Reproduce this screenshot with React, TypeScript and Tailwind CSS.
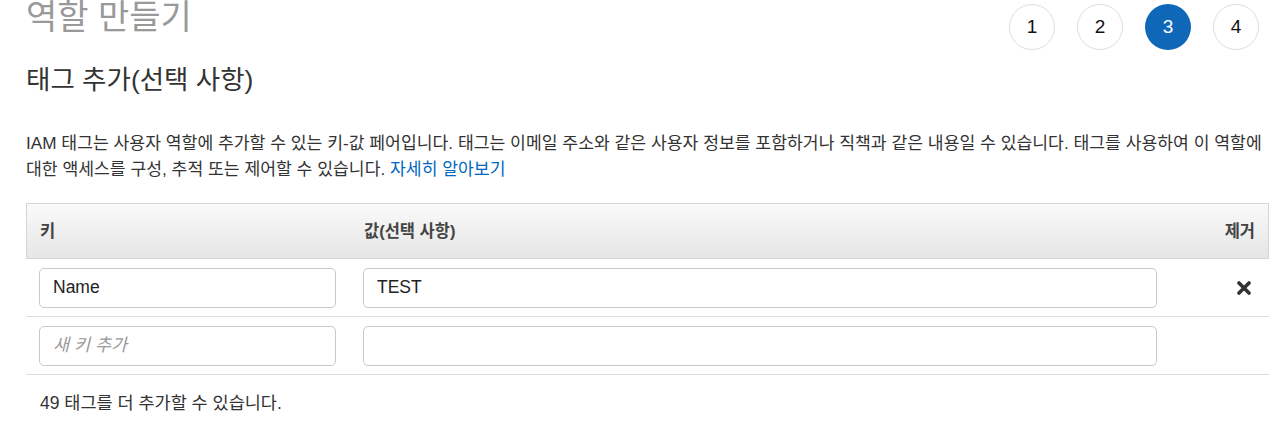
import React from "react";

const font = { fontFamily: '"Liberation Sans", "Noto Sans CJK KR", sans-serif' };

function Step({ n, active }: { n: number; active?: boolean }) {
  return (
    <div
      className={
        active
          ? "w-[46px] h-[46px] rounded-full bg-[#0f67b8] text-white flex items-center justify-center text-[19px]"
          : "w-[46px] h-[46px] rounded-full border border-[#dddddd] bg-white text-[#111] flex items-center justify-center text-[19px]"
      }
    >
      {n}
    </div>
  );
}

export default function App() {
  return (
    <div className="bg-white w-[1280px] h-[426px] overflow-hidden text-[#333]" style={font}>
      <div className="pl-[26px] pr-[11px]">
        <div className="flex justify-between items-start">
          <h1 className="text-[34px] leading-[40px] text-[#999] mt-[-3px]">역할 만들기</h1>
          <div className="flex gap-[22px] mt-[4px] mr-[10px]">
            <Step n={1} />
            <Step n={2} />
            <Step n={3} active />
            <Step n={4} />
          </div>
        </div>
        <h2 className="text-[26.5px] leading-[32px] text-[#333] mt-[14px]">태그 추가(선택 사항)</h2>
        <p className="text-[17.2px] leading-[26px] text-[#333] mt-[34px] whitespace-nowrap">
          IAM 태그는 사용자 역할에 추가할 수 있는 키-값 페어입니다. 태그는 이메일 주소와 같은 사용자 정보를 포함하거나 직책과 같은 내용일 수 있습니다. 태그를 사용하여 이 역할에
          <br />
          대한 액세스를 구성, 추적 또는 제어할 수 있습니다. <span className="text-[#0066c0]">자세히 알아보기</span>
        </p>
        <div className="mt-[21px]">
          <div className="flex h-[56px] items-center border border-[#d5d5d5] bg-gradient-to-b from-[#fafafa] to-[#e6e6e6] text-[16.5px] font-bold text-[#444]">
            <div className="w-[324px] pl-[13px]">키</div>
            <div className="flex-1 pl-[13px]">값(선택 사항)</div>
            <div className="w-[98px] pr-[13px] text-right">제거</div>
          </div>
          <div className="flex items-center h-[58px] border-b border-[#dddddd]">
            <div className="w-[324px] pl-[13px] pr-[14px]">
              <div className="h-[40px] border border-[#c8c8c8] rounded-[5px] flex items-center px-[13px] text-[17.5px] text-[#222]">Name</div>
            </div>
            <div className="flex-1 pl-[13px] pr-[14px]">
              <div className="h-[40px] border border-[#c8c8c8] rounded-[5px] flex items-center px-[13px] text-[17.5px] text-[#222]">TEST</div>
            </div>
            <div className="w-[98px] flex justify-end pr-[18px]">
              <svg width="14" height="14" viewBox="0 0 14 14">
                <path d="M2 2 L12 12 M12 2 L2 12" stroke="#333" strokeWidth="3.6" strokeLinecap="round" />
              </svg>
            </div>
          </div>
          <div className="flex items-center h-[58px] border-b border-[#dddddd]">
            <div className="w-[324px] pl-[13px] pr-[14px]">
              <div className="h-[40px] border border-[#c8c8c8] rounded-[5px] flex items-center px-[13px] text-[17.5px] text-[#999] italic">새 키 추가</div>
            </div>
            <div className="flex-1 pl-[13px] pr-[14px]">
              <div className="h-[40px] border border-[#c8c8c8] rounded-[5px]"></div>
            </div>
            <div className="w-[98px]"></div>
          </div>
          <div className="pl-[14px] pt-[16px] text-[17.5px] leading-[24px] text-[#333]">49 태그를 더 추가할 수 있습니다.</div>
        </div>
      </div>
    </div>
  );
}
